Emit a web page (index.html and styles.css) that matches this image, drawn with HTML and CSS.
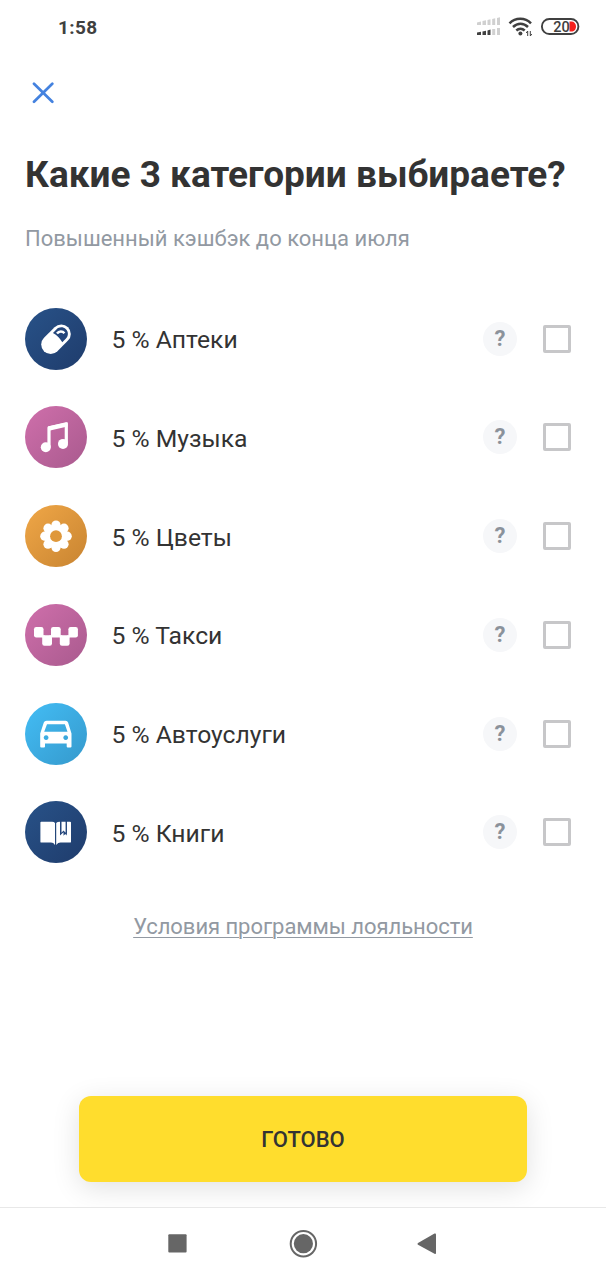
FILE: index.html
```html
<!DOCTYPE html>
<html lang="ru">
<head>
<meta charset="utf-8">
<title>Категории кэшбэка</title>
<link rel="stylesheet" href="styles.css">
</head>
<body>
<div class="screen">
  <header class="status">
    <span class="time">1:58</span>
    <svg class="status-icons" viewBox="0 0 106 24" width="106" height="24">
      <g fill="#d0d0d0"><path d="M2 7.500l4-1v3.500H2zM7.500 6l3.500-.7V10H7.500zM12.500 5l3-.7V10h-3zM17.200 4l3-.7V10h-3zM22 3l3-.7V10h-3z"/><path d="M17.200 14h3v6h-3zM22 13h3v7h-3z"/></g>
      <path fill="#404040" d="M2 17.500l4-.7V20H2zM7.500 16.500l3.500-.7V20H7.500zM12.500 15.500l3-1V20h-3z"/>
      <g fill="none" stroke="#404040" stroke-width="2.500"><path d="M34.500 8.300C40.500 2.200 50 2.200 56 8.300"/><path d="M38 12c4.500-4.300 10.500-4.300 15 0"/><path d="M41.300 15.500c2.500-2.300 5.900-2.300 8.400 0"/></g>
      <circle cx="45.400" cy="18.600" r="2" fill="#404040"/>
      <path d="M52.700 21v-5l-1.500 2M55.300 16v5l1.500-2" fill="none" stroke="#404040"/>
      <rect x="66.900" y="4" width="36.500" height="15" rx="7.500" fill="#fff" stroke="#404040" stroke-width="1.900"/>
      <path d="M94.500 6.500h2c2.500 0 4.500 2 4.500 5s-2 5-4.500 5h-2z" fill="#f5201c"/>
      <text x="78.200" y="16.500" class="battery">20</text>
    </svg>
  </header>

  <button class="close" aria-label="Закрыть">
    <svg viewBox="0 0 22 22" width="22" height="22"><path d="M2 1.700l18.300 18M20.300 1.700L2 19.700" stroke="#4482df" stroke-width="2.700" stroke-linecap="round"/></svg>
  </button>
  <h1 class="title">Какие 3 категории выбираете?</h1>
  <p class="subtitle">Повышенный кэшбэк до конца июля</p>

  <ul class="list">
    <li class="row">
      <svg class="badge navy" viewBox="0 0 62 62">
        <g transform="translate(31 31.200) rotate(45)"><rect x="-9.500" y="-17" width="19" height="34" rx="9.500" fill="#fff"/><path d="M-6.600 -2.300V-7.500C-6.600 -11 -4 -14 0 -14S6.600 -11 6.600 -7.500V-2.300Q0 -4.200 -6.600 -2.300z" fill="#24467c"/></g>
        <path d="M32 25.500c2-2.600 5.500-2.600 7.400-.2" fill="none" stroke="#fff" stroke-width="2.500"/>
      </svg>
      <span class="name">5 % Аптеки</span><span class="help">?</span><span class="check"></span>
    </li>
    <li class="row">
      <svg class="badge pink" viewBox="0 0 62 62">
        <path d="M24 41V21.700L41.300 17.800V37.500" fill="none" stroke="#fff" stroke-width="3.200" stroke-linejoin="round"/><path d="M23 20.500l19.500-4.300v4.300L23 25z" fill="#fff"/>
        <circle cx="20.800" cy="41.300" r="5" fill="#fff"/><circle cx="38" cy="37.900" r="5" fill="#fff"/>
      </svg>
      <span class="name">5 % Музыка</span><span class="help">?</span><span class="check"></span>
    </li>
    <li class="row">
      <svg class="badge orange" viewBox="0 0 62 62">
        <g fill="#fff"><circle cx="31" cy="31.200" r="12"/><circle cx="31" cy="20" r="4.600"/><circle cx="31" cy="42.400" r="4.600"/><circle cx="19.800" cy="31.200" r="4.600"/><circle cx="42.200" cy="31.200" r="4.600"/><circle cx="23" cy="23.200" r="4.600"/><circle cx="39" cy="23.200" r="4.600"/><circle cx="23" cy="39.200" r="4.600"/><circle cx="39" cy="39.200" r="4.600"/></g>
        <circle cx="31" cy="31.200" r="5.900" fill="#df983b"/>
      </svg>
      <span class="name">5 % Цветы</span><span class="help">?</span><span class="check"></span>
    </li>
    <li class="row">
      <svg class="badge pink" viewBox="0 0 62 62">
        <g fill="#fff"><rect x="9" y="23" width="9.500" height="10.500" rx="2.200"/><rect x="26" y="23" width="9.700" height="10.500" rx="2.200"/><rect x="43.400" y="23" width="9.500" height="10.500" rx="2.200"/><rect x="17.200" y="31.200" width="9.800" height="10.600" rx="2.200"/><rect x="34.800" y="31.200" width="9.800" height="10.600" rx="2.200"/><path d="M16.700 31.200h3v2.300h-3zM24.500 31.200h3v2.300h-3zM34.200 31.200h3v2.300h-3zM42.200 31.200h3v2.300h-3z"/></g>
      </svg>
      <span class="name">5 % Такси</span><span class="help">?</span><span class="check"></span>
    </li>
    <li class="row">
      <svg class="badge blue" viewBox="0 0 62 62">
        <path fill="#fff" fill-rule="evenodd" d="M21.500 17.700H40.500Q42.500 17.700 43.100 19.600L46.500 30.500V43.500Q46.500 44.600 45.400 44.600H42.800Q41.700 44.600 41.700 43.500V40.400H20V43.500Q20 44.600 18.900 44.600H16.300Q15.200 44.600 15.200 43.500V30.500L18.800 19.600Q19.500 17.700 21.500 17.700zM22 21.200L19.200 28.700H42.500L39.900 21.200zM21.100 32.200a2.400 2.400 0 1 0 .01 0zM40.700 32.200a2.400 2.400 0 1 0 .01 0z"/>
      </svg>
      <span class="name">5 % Автоуслуги</span><span class="help">?</span><span class="check"></span>
    </li>
    <li class="row">
      <svg class="badge navy" viewBox="0 0 62 62">
        <path fill="#fff" d="M16.300 20.700H27Q29 20.700 30 22V44Q28.500 41.600 26 41.600H16.300Q15.400 41.600 15.400 40.700V21.600Q15.400 20.700 16.300 20.700zM31.200 22Q32.200 20.700 35 20.700V33.500L38.500 30.500V34.800L41 32.300L41.900 33.500V20.700H45Q46 20.700 46 21.600V40.700Q46 41.600 45 41.600H35.500Q33 41.600 31.200 44z"/>
        <path fill="#24467c" d="M35 20.500H41.700V34.500L38.400 31.200L35 34.500z"/><path fill="#fff" d="M36.500 20.700H40.600V31.700L38.500 29.600L36.500 31.700z"/>
      </svg>
      <span class="name">5 % Книги</span><span class="help">?</span><span class="check"></span>
    </li>
  </ul>

  <a class="terms">Условия программы лояльности</a>
  <button class="done">ГОТОВО</button>

  <nav class="nav">
    <svg viewBox="0 0 606 72" width="606" height="72" fill="#666">
      <rect x="168.300" y="26.300" width="18.300" height="18.300" rx="1"/>
      <circle cx="303.400" cy="35.700" r="12.700" fill="none" stroke="#666" stroke-width="2"/><circle cx="303.400" cy="35.700" r="9.600"/>
      <path d="M418 34.900L434.500 25.600Q436 25 436 26.600V44.900Q436 46.500 434.500 45.800L418 36.700Q416.800 35.800 418 34.900z"/>
    </svg>
  </nav>
</div>
</body>
</html>
```
FILE: styles.css
```css
* { box-sizing: border-box; }
body { margin: 0; background: #fff; font-family: Roboto, "Noto Sans", sans-serif; color: #333; }
button { border: 0; padding: 0; background: none; font: inherit; }
.screen { width: 606px; height: 1280px; display: flex; flex-direction: column; overflow: hidden; }
.status { height: 54px; flex: none; display: flex; align-items: center; justify-content: space-between; padding: 0 25px 0 58px; }
.time { font-size: 19px; font-weight: 700; letter-spacing: .4px; color: #404040; }
.battery { font: 500 14.5px Roboto, sans-serif; fill: #404040; }
.close { width: 22px; height: 22px; margin: 28px 0 0 32px; }
.close svg { display: block; }
.title { margin: 49px 0 0 25px; font-size: 37px; line-height: 44px; font-weight: 700; white-space: nowrap; }
.subtitle { margin: 29px 0 0 25px; font-size: 22px; line-height: 26px; color: #9299a2; white-space: nowrap; }
.list { list-style: none; margin: 55.500px 0 0; padding: 0 35px 0 24.500px; display: flex; flex-direction: column; gap: 36.800px; }
.row { display: flex; align-items: center; height: 62px; }
.badge { width: 62px; height: 62px; border-radius: 50%; flex: none; }
.navy { background: linear-gradient(135deg, #285288, #1f3c6c); }
.pink { background: linear-gradient(135deg, #cf6fab, #a95a8e); }
.orange { background: linear-gradient(135deg, #f0a747, #c88431); }
.blue { background: linear-gradient(135deg, #43bdf5, #3599cc); }
.name { flex: 1; padding: 3px 0 0 25px; font-size: 24.700px; line-height: 30px; white-space: nowrap; }
.help { width: 34px; height: 34px; border-radius: 50%; background: #f6f7f9; color: #8b929b; font-size: 22px; font-weight: 700; line-height: 34px; text-align: center; }
.check { width: 28px; height: 28px; margin-left: 26px; border: 3px solid #c7c7c9; border-radius: 2px; }
.terms { margin-top: 50.500px; align-self: center; font-size: 22px; line-height: 26px; letter-spacing: -.05px; color: #9299a2; text-decoration: underline; text-decoration-thickness: 1px; text-underline-offset: 3px; white-space: nowrap; }
.done { width: 448px; height: 86px; margin: auto auto 25px; flex: none; border-radius: 12px; background: #ffdd2d; color: #333; font-size: 22px; font-weight: 500; line-height: 86px; padding-top: 1px; box-shadow: 0 6px 28px rgba(0, 0, 0, .12); }
.nav { height: 73px; flex: none; border-top: 1px solid #e8e8e8; background: #fff; position: relative; }
.nav svg { display: block; }
```
